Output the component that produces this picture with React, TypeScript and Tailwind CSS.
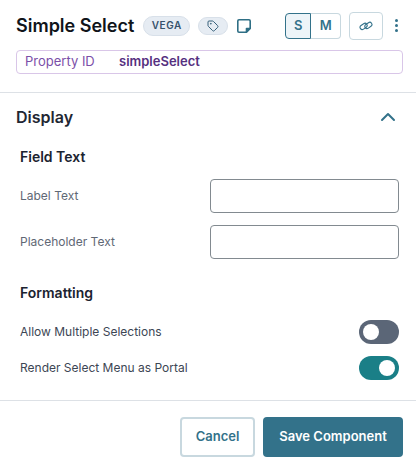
import React from 'react';
import { ChevronUp, Tag } from 'lucide-react';

const FieldRow: React.FC<{ label: string }> = ({ label }) => (
  <div className="flex items-center justify-between h-[34px]">
    <label className="text-[12px] text-[#5f6875]">{label}</label>
    <input className="w-[189px] h-[34px] bg-white border border-[#828a90] rounded-[4px]" />
  </div>
);

const ToggleRow: React.FC<{ label: string; on: boolean }> = ({ label, on }) => (
  <div className="flex items-center justify-between h-6">
    <span className="text-[12px] text-[#3d4654]">{label}</span>
    <span className={`flex items-center w-10 h-6 rounded-full p-[4px] ${on ? 'bg-[#1a7f87] justify-end' : 'bg-[#5b6677] justify-start'}`}>
      <span className="w-4 h-4 rounded-full bg-white" />
    </span>
  </div>
);

const App: React.FC = () => {
  return (
    <div className="w-[416px] h-[465px] bg-white overflow-hidden font-['Inter',sans-serif]">
      <header className="h-[93px] border-b border-[#dde1e6] pl-4 pr-[13px]">
        <div className="flex items-center h-[50px] pt-[1px]">
          <h1 className="text-[18px] leading-6 font-semibold text-[#10141a]">Simple Select</h1>
          <span className="ml-[9px] h-5 w-[47px] flex items-center justify-center rounded-full bg-[#e6ecf3] border border-[#d8e0e9] text-[10px] font-semibold tracking-[0.6px] text-[#36526b]">VEGA</span>
          <span className="ml-2 h-[18px] w-[30px] flex items-center justify-center rounded-full bg-[#e6ecf3] border border-[#d8e0e9] text-[#36607a]">
            <Tag size={12} />
          </span>
          <svg width="16" height="16" viewBox="0 0 16 16" fill="none" stroke="#2f6f85" strokeWidth="1.6" strokeLinejoin="round" className="ml-[8px]">
            <path d="M3 1.8h10a1.2 1.2 0 0 1 1.2 1.2v7l-4.2 4.2H3A1.2 1.2 0 0 1 1.8 13V3A1.2 1.2 0 0 1 3 1.8Z" />
            <path d="M14.2 10.5h-3.7v3.7Z" fill="#2f6f85" />
          </svg>
          <div className="ml-[33px] flex h-[26px]">
            <span className="w-[26px] flex items-center justify-center rounded-l-[4px] bg-[#edf4f8] border border-[#33728a] text-[13px] font-semibold text-[#33728a]">S</span>
            <span className="w-[30px] flex items-center justify-center rounded-r-[4px] border border-l-0 border-[#c8d8df] text-[13px] font-semibold text-[#33728a]">M</span>
          </div>
          <span className="ml-2 w-[34px] h-[28px] flex items-center justify-center rounded-[4px] border border-[#c8d8df]">
            <svg width="14" height="14" viewBox="0 0 14 14" fill="none" stroke="#33728a" strokeWidth="1.1">
              <rect x="0.8" y="5.2" width="7.6" height="4.4" rx="2.2" transform="rotate(-35 4.6 7.4)" />
              <rect x="5.6" y="4.2" width="7.6" height="4.4" rx="2.2" transform="rotate(-35 9.4 6.4)" />
            </svg>
          </span>
          <div className="ml-[12px] flex flex-col gap-[2px]">
            <span className="w-[3px] h-[3px] rounded-full bg-[#33728a]" />
            <span className="w-[3px] h-[3px] rounded-full bg-[#33728a]" />
            <span className="w-[3px] h-[3px] rounded-full bg-[#33728a]" />
          </div>
        </div>
        <div className="flex items-center h-[24px] rounded-[4px] border border-[#d9c6e8] px-2 text-[13px]">
          <span className="w-[94px] text-[#7b4fa8]">Property ID</span>
          <span className="font-semibold text-[#56307f]">simpleSelect</span>
        </div>
      </header>

      <section className="pl-4 pr-[17px]">
        <div className="flex items-center justify-between h-[48px]">
          <h2 className="text-[16px] font-semibold text-[#1f2733]">Display</h2>
          <ChevronUp size={24} className="text-[#33728a] -mr-[1px]" />
        </div>
        <div className="pl-1">
          <h3 className="text-[14px] leading-5 font-semibold text-[#1b2330] mt-[6px] mb-[12px]">Field Text</h3>
          <div className="flex flex-col gap-3">
            <FieldRow label="Label Text" />
            <FieldRow label="Placeholder Text" />
          </div>
          <h3 className="text-[14px] leading-5 font-semibold text-[#1b2330] mt-[24px] mb-[17px]">Formatting</h3>
          <div className="flex flex-col gap-3">
            <ToggleRow label="Allow Multiple Selections" on={false} />
            <ToggleRow label="Render Select Menu as Portal" on={true} />
          </div>
        </div>
      </section>

      <footer className="mt-[20px] border-t border-[#dde1e6] px-[13px] pt-4 flex justify-end gap-2">
        <button className="w-[75px] h-10 rounded-[4px] border-2 border-[#c8d8df] bg-white text-[13px] font-semibold text-[#33728a]">Cancel</button>
        <button className="w-[140px] h-10 rounded-[4px] bg-[#33728a] text-[13px] font-semibold text-white">Save Component</button>
      </footer>
    </div>
  );
};

export default App;
